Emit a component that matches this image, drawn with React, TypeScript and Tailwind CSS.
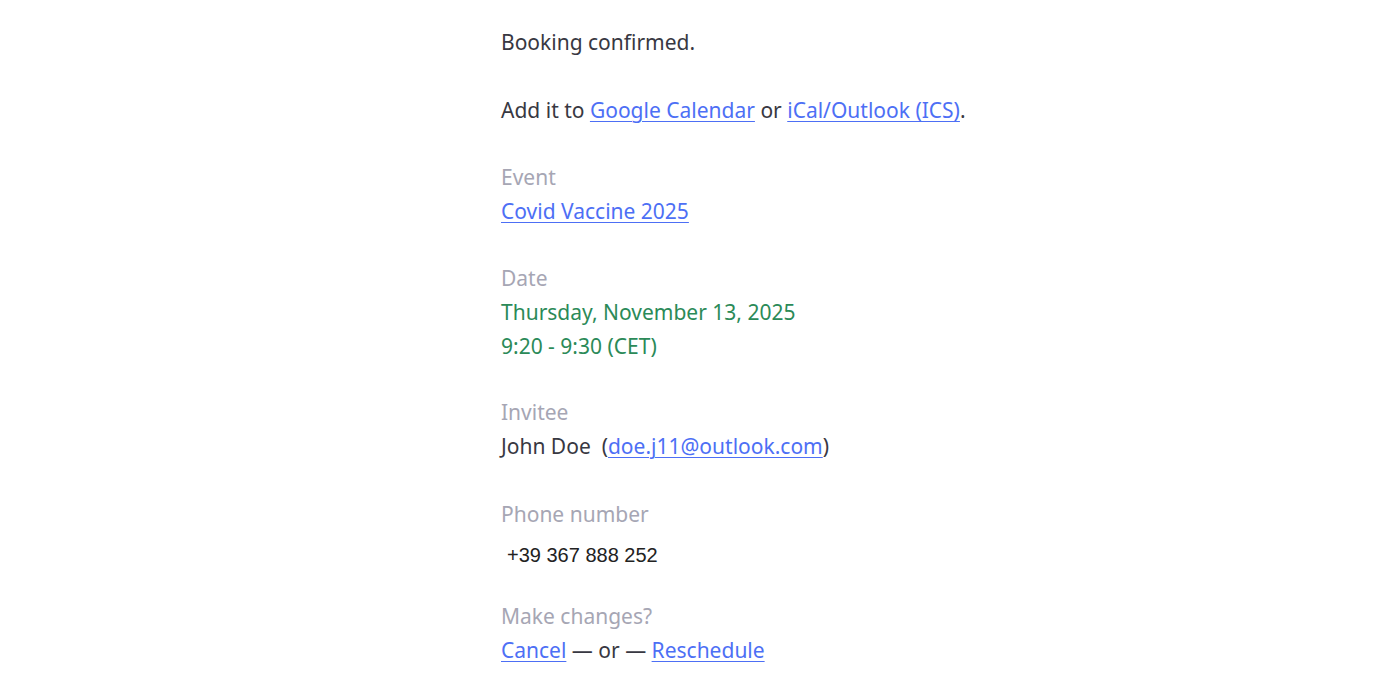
import React from "react";

const font = { fontFamily: '"Noto Sans", "Open Sans", sans-serif' };

export default function App() {
  const link = "text-[#4d6ff5] underline underline-offset-[3px] decoration-1";
  const label = "text-[#a6a6b4]";
  return (
    <div className="min-h-[700px] w-[1400px] bg-white">
      <div
        className="ml-[501px] pt-[25px] text-[21px] leading-[34px] text-[#383842] whitespace-nowrap"
        style={font}
      >
        <div>Booking confirmed.</div>
        <div className="mt-[34px]">
          Add it to <a className={link}>Google Calendar</a> or{" "}
          <a className={link}>iCal/Outlook (ICS)</a>.
        </div>

        <div className="mt-[33px]">
          <div className={label}>Event</div>
          <a className={link}>Covid Vaccine 2025</a>
        </div>

        <div className="mt-[33px]">
          <div className={label}>Date</div>
          <div className="text-[#2b8a58]">Thursday, November 13, 2025</div>
          <div className="text-[#2b8a58]">9:20 - 9:30 (CET)</div>
        </div>

        <div className="mt-[32px]">
          <div className={label}>Invitee</div>
          <div>
            John Doe&nbsp; (<a className={link}>doe.j11@outlook.com</a>)
          </div>
        </div>

        <div className="mt-[34px]">
          <div className={label}>Phone number</div>
          <div
            className="mt-[7px] pl-[6px] text-[20px] leading-[34px] text-[#222]"
            style={{ fontFamily: '"Liberation Sans", Arial, sans-serif' }}
          >
            +39 367 888 252
          </div>
        </div>

        <div className="mt-[27px]">
          <div className={label}>Make changes?</div>
          <div>
            <a className={link}>Cancel</a> — or — <a className={link}>Reschedule</a>
          </div>
        </div>
      </div>
    </div>
  );
}
